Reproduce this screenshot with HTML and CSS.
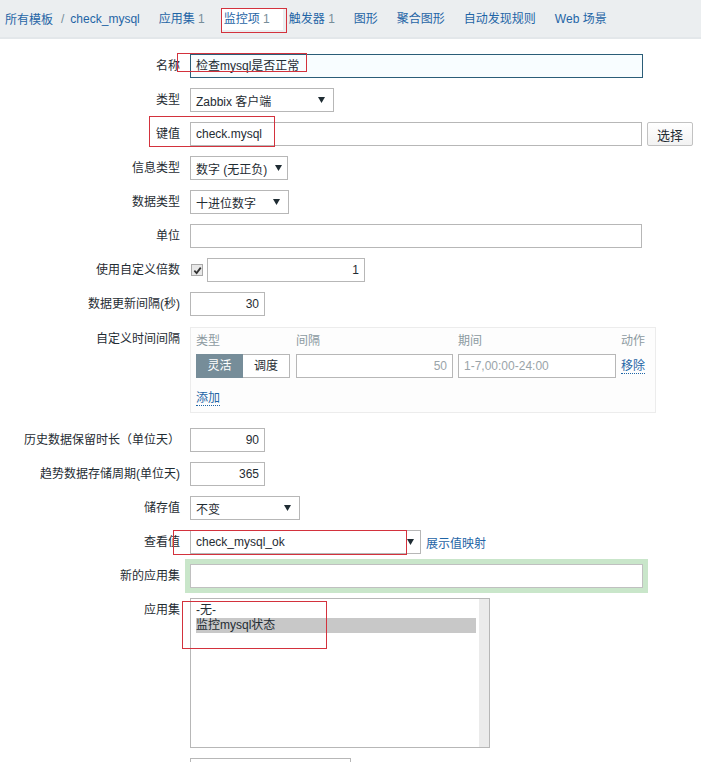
FILE: index.html
```html
<!DOCTYPE html>
<html lang="zh-CN">
<head>
  <meta charset="UTF-8">
  <title>监控项</title>
  <link rel="stylesheet" href="styles.css">
</head>
<body>

  <div class="page">

    <!-- top navigation -->
    <div class="header">
      <a class="crumb" href="#">所有模板</a>
      <span class="crumb-sep">/</span>
      <a class="crumb" href="#">check_mysql</a>
      <a class="tab" href="#">应用集 <span class="count">1</span></a>
      <a class="tab tab-active" href="#">监控项 <span class="count">1</span></a>
      <a class="tab" href="#">触发器 <span class="count">1</span></a>
      <a class="tab" href="#">图形</a>
      <a class="tab" href="#">聚合图形</a>
      <a class="tab" href="#">自动发现规则</a>
      <a class="tab" href="#">Web 场景</a>
    </div>

    <div class="form">

      <div class="row">
        <label class="label">名称</label>
        <div class="field">
          <div class="input input-wide input-focus">检查mysql是否正常</div>
        </div>
      </div>

      <div class="row">
        <label class="label">类型</label>
        <div class="field">
          <div class="select w-type">Zabbix 客户端 <svg class="arrow" viewBox="0 0 7 6"><polygon points="0,0 7,0 3.5,6"/></svg></div>
        </div>
      </div>

      <div class="row">
        <label class="label">键值</label>
        <div class="field">
          <div class="input w-key">check.mysql</div>
          <button class="btn">选择</button>
        </div>
      </div>

      <div class="row">
        <label class="label">信息类型</label>
        <div class="field">
          <div class="select w-info">数字 (无正负) <svg class="arrow" viewBox="0 0 7 6"><polygon points="0,0 7,0 3.5,6"/></svg></div>
        </div>
      </div>

      <div class="row">
        <label class="label">数据类型</label>
        <div class="field">
          <div class="select w-data">十进位数字 <svg class="arrow" viewBox="0 0 7 6"><polygon points="0,0 7,0 3.5,6"/></svg></div>
        </div>
      </div>

      <div class="row">
        <label class="label">单位</label>
        <div class="field">
          <div class="input w-key"></div>
        </div>
      </div>

      <div class="row">
        <label class="label">使用自定义倍数</label>
        <div class="field">
          <span class="checkbox">
            <svg viewBox="0 0 10 10"><path d="M1.5 5.2 L4 7.8 L8.6 1.8" fill="none" stroke="#333" stroke-width="2"/></svg>
          </span>
          <div class="input w-mult num">1</div>
        </div>
      </div>

      <div class="row">
        <label class="label">数据更新间隔(秒)</label>
        <div class="field">
          <div class="input w-short num">30</div>
        </div>
      </div>

      <div class="row row-box">
        <label class="label">自定义时间间隔</label>
        <div class="interval-box">
          <div class="interval-grid">
            <span class="col-head">类型</span>
            <span class="col-head">间隔</span>
            <span class="col-head">期间</span>
            <span class="col-head">动作</span>

            <div class="toggle">
              <span class="toggle-on">灵活</span>
              <span class="toggle-off">调度</span>
            </div>
            <div class="input num muted">50</div>
            <div class="input muted">1-7,00:00-24:00</div>
            <a class="link" href="#">移除</a>
          </div>
          <a class="link add-link" href="#">添加</a>
        </div>
      </div>

      <div class="row">
        <label class="label">历史数据保留时长（单位天）</label>
        <div class="field">
          <div class="input w-short num">90</div>
        </div>
      </div>

      <div class="row">
        <label class="label">趋势数据存储周期(单位天)</label>
        <div class="field">
          <div class="input w-short num">365</div>
        </div>
      </div>

      <div class="row">
        <label class="label">储存值</label>
        <div class="field">
          <div class="select w-store">不变 <svg class="arrow" viewBox="0 0 7 6"><polygon points="0,0 7,0 3.5,6"/></svg></div>
        </div>
      </div>

      <div class="row">
        <label class="label">查看值</label>
        <div class="field">
          <div class="select w-view">check_mysql_ok <svg class="arrow" viewBox="0 0 7 6"><polygon points="0,0 7,0 3.5,6"/></svg></div>
          <a class="link-plain" href="#">展示值映射</a>
        </div>
      </div>

      <div class="row">
        <label class="label">新的应用集</label>
        <div class="field">
          <div class="input input-wide input-ok"></div>
        </div>
      </div>

      <div class="row">
        <label class="label">应用集</label>
        <div class="listbox">
          <div class="options">
            <div class="option">-无-</div>
            <div class="option option-selected">监控mysql状态</div>
          </div>
          <div class="scroll-track"></div>
        </div>
      </div>

      <div class="row">
        <label class="label"></label>
        <div class="field">
          <div class="input w-last"></div>
        </div>
      </div>

    </div>

    <!-- red annotation boxes drawn over the screenshot -->
    <div class="mark mark-tab"></div>
    <div class="mark mark-name"></div>
    <div class="mark mark-key"></div>
    <div class="mark mark-view"></div>
    <div class="mark mark-apps"></div>

  </div>

</body>
</html>
```

FILE: styles.css
```css
body {
  margin: 0;
  background: #fff;
  font-family: "Liberation Sans", Arial, "Noto Sans CJK SC", sans-serif;
  font-size: 12px;
  color: #1f2c33;
  overflow: hidden;
}

.page {
  position: relative;
  width: 701px;
  height: 762px;
  overflow: hidden;
}

/* Header */
.header {
  display: flex;
  align-items: center;
  height: 37px;
  padding-left: 5px;
  background: #ebeef0;
  border-bottom: 2px solid #e3e7ea;
}

.crumb {
  color: #1f65a6;
  text-decoration: none;
}

.crumb-sep {
  color: #768d99;
  margin: 0 6px 0 8px;
}

.tab {
  color: #1f65a6;
  text-decoration: none;
  margin-left: 19px;
  line-height: 22px;
}

.tab .count {
  color: #768d99;
}

.tab-active {
  background: #fff;
  padding: 0 13px 0 3px;
  margin-left: 16px;
  margin-right: -13px;
}

/* Form rows */
.form {
  padding-top: 15px;
}

.row {
  display: grid;
  grid-template-columns: 180px 1fr;
  column-gap: 10px;
  margin-bottom: 10px;
}

.row-box {
  margin-top: 11px;
  margin-bottom: 15px;
}

.label {
  text-align: right;
  line-height: 24px;
  white-space: nowrap;
}

.field {
  display: flex;
  align-items: center;
  height: 24px;
}

.input {
  box-sizing: border-box;
  height: 24px;
  line-height: 22px;
  padding: 0 5px;
  border: 1px solid #b7b7b7;
  background: #fff;
  white-space: nowrap;
  overflow: hidden;
}

.input-wide {
  width: 453px;
}

.input-focus {
  border-color: #2b5d78;
  background: #f8fdff;
}

.input-ok {
  box-shadow: 0 0 0 5px #c9e6ca;
  border-color: #c0c0c0;
}

.num {
  text-align: right;
}

.muted {
  color: #9aa4a9;
}

.w-key { width: 452px; }
.w-mult { width: 158px; }
.w-short { width: 75px; }
.w-last { width: 161px; }

.btn {
  box-sizing: border-box;
  width: 46px;
  height: 24px;
  margin-left: 5px;
  border: 1px solid #c2c2c2;
  border-radius: 2px;
  background: linear-gradient(#ffffff, #f2f2f2);
  font-family: inherit;
  font-size: 13px;
  color: #1f2c33;
  padding: 0;
}

.select {
  box-sizing: border-box;
  display: flex;
  align-items: center;
  justify-content: space-between;
  height: 24px;
  padding: 0 8px 0 5px;
  border: 1px solid #b7b7b7;
  background: #fff;
  white-space: nowrap;
}

.select .arrow {
  width: 7px;
  height: 6px;
  fill: #1f2c33;
}

.w-type { width: 144px; }
.w-info { width: 98px; padding-right: 5px; }
.w-data { width: 99px; }
.w-store { width: 110px; }
.w-view { width: 231px; padding-right: 6px; }

.checkbox {
  box-sizing: border-box;
  display: flex;
  align-items: center;
  justify-content: center;
  width: 12px;
  height: 12px;
  margin: 0 4px 0 1px;
  border: 1px solid #a9a9a9;
  background: #e8e8e8;
}

.checkbox svg {
  width: 9px;
  height: 9px;
}

.link-plain {
  color: #1f65a6;
  text-decoration: none;
  margin-left: 5px;
}

.link {
  color: #1f65a6;
  text-decoration: none;
  border-bottom: 1px dotted #1f65a6;
  line-height: 14px;
  justify-self: start;
  align-self: center;
}

/* Custom interval box */
.interval-box {
  box-sizing: border-box;
  width: 466px;
  height: 86px;
  padding: 6px 5px 0 5px;
  border: 1px solid #ececec;
  background: #fdfdfd;
}

.interval-grid {
  display: grid;
  grid-template-columns: 95px 157px 158px auto;
  grid-template-rows: 20px 24px;
  column-gap: 5px;
}

.col-head {
  color: #8c9aa1;
  line-height: 14px;
}

.toggle {
  display: flex;
  height: 24px;
}

.toggle span {
  box-sizing: border-box;
  width: 47px;
  line-height: 22px;
  text-align: center;
  border: 1px solid #b7b7b7;
}

.toggle-on {
  background: #768d99;
  border-color: #768d99 !important;
  color: #fff;
}

.toggle-off {
  background: #fff;
  border-left: none !important;
}

.add-link {
  display: inline-block;
  margin-top: 13px;
}

/* Applications listbox */
.listbox {
  box-sizing: border-box;
  display: flex;
  width: 300px;
  height: 150px;
  border: 1px solid #b7b7b7;
  background: #fff;
}

.options {
  flex: 1;
  padding: 4px 3px 0 5px;
}

.option {
  line-height: 15px;
}

.option-selected {
  background: #c8c8c8;
}

.scroll-track {
  width: 10px;
  background: #ebebeb;
}

/* Red annotation boxes */
.mark {
  position: absolute;
  border: 1px solid #d3323d;
  pointer-events: none;
}

.mark-tab { left: 221px; top: 8px; width: 64px; height: 23px; }
.mark-name { left: 177px; top: 53px; width: 128px; height: 17px; }
.mark-key { left: 149px; top: 116px; width: 124px; height: 29px; }
.mark-view { left: 173px; top: 530px; width: 232px; height: 23px; }
.mark-apps { left: 182px; top: 601px; width: 143px; height: 46px; }
```
